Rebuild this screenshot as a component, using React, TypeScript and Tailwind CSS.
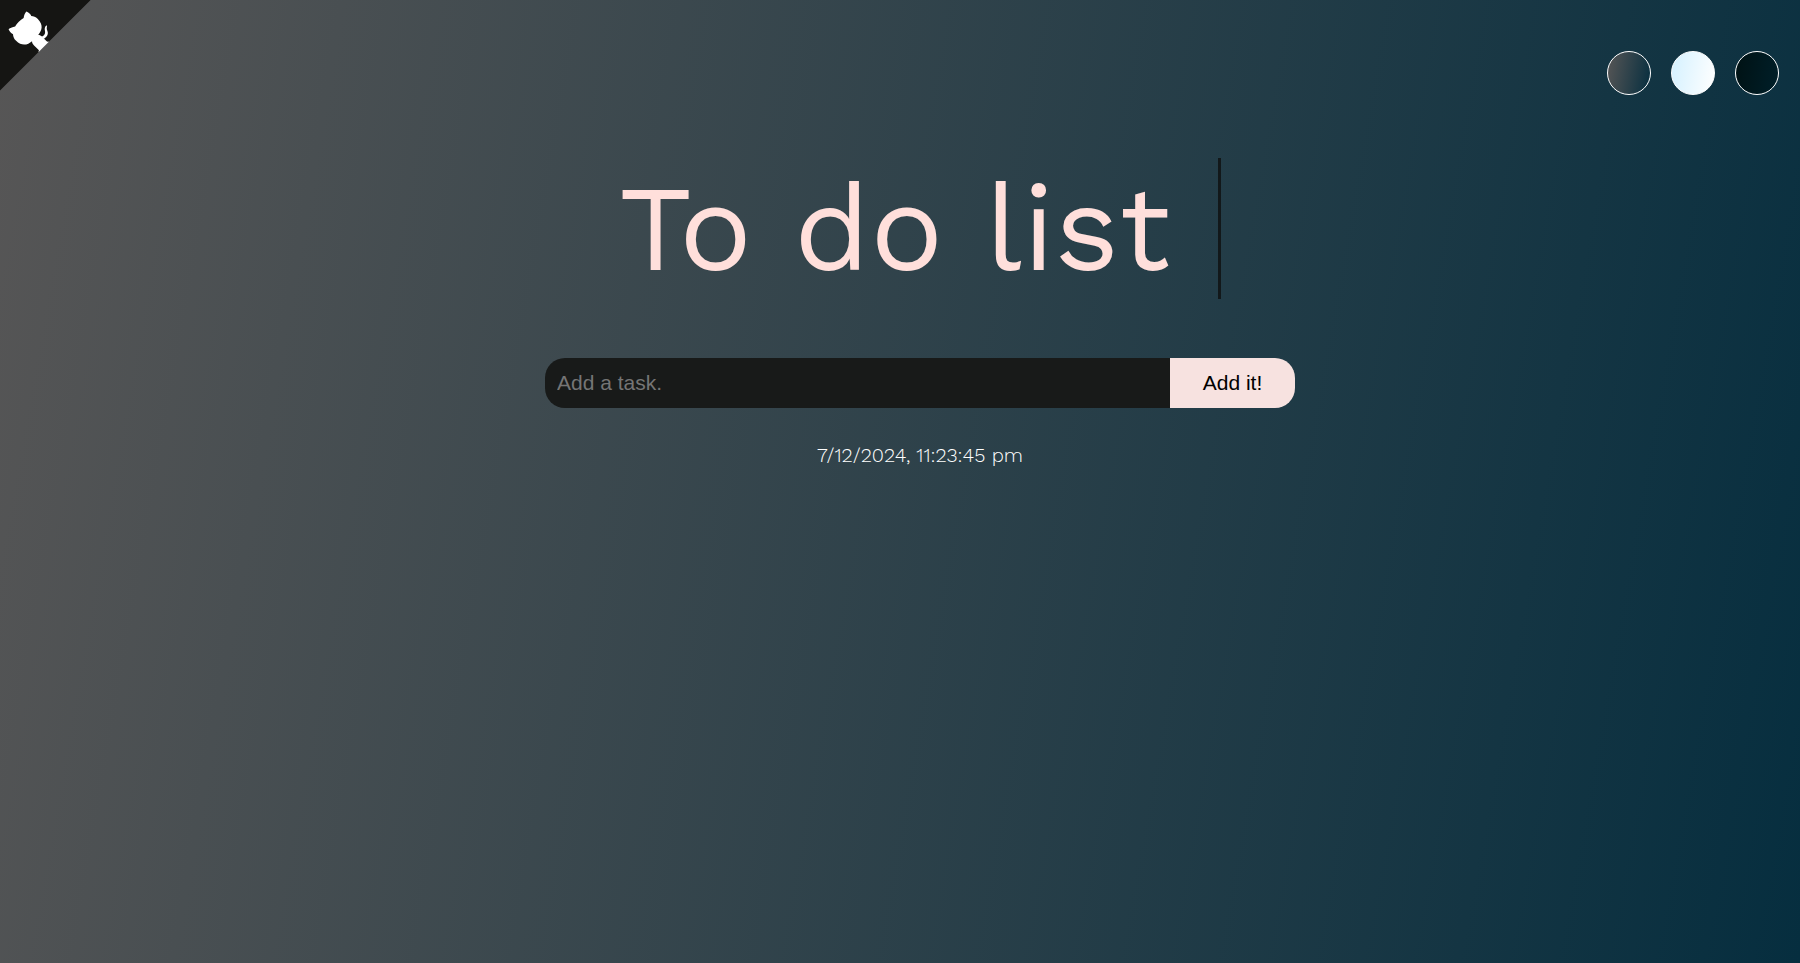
import { useState } from "react";
import type { FormEvent } from "react";

const themes = [
  { name: "Standard theme", fill: "bg-[linear-gradient(100deg,#575656,#062e3f)]" },
  { name: "Light theme", fill: "bg-[linear-gradient(100deg,#d4f1ff,#ffffff)]" },
  { name: "Darker theme", fill: "bg-[linear-gradient(100deg,#001214,#001f29)]" },
];

function GithubCorner() {
  return (
    <a href="#source" aria-label="View source on GitHub" className="absolute left-0 top-0">
      <svg width="91" height="91" viewBox="12 11 228 228" aria-hidden="true">
        <g transform="translate(250 0) scale(-1 1)">
          <path fill="#151513" d="M0,0 L115,115 L130,115 L142,142 L250,250 L250,0 Z" />
          <path
            fill="#fff"
            d="M128.3,109.0 C113.8,99.7 119.0,89.6 119.0,89.6 C122.0,82.7 120.5,78.6 120.5,78.6 C119.2,72.0 123.4,76.3 123.4,76.3 C127.3,80.9 125.5,87.3 125.5,87.3 C122.9,97.6 130.6,101.9 134.4,103.2"
          />
          <path
            fill="#fff"
            d="M115.0,115.0 C114.9,115.1 118.7,116.5 119.8,115.4 L133.7,101.6 C136.9,99.2 139.9,98.4 142.2,98.6 C133.8,88.0 127.5,74.4 143.8,58.0 C148.5,53.4 154.0,51.2 159.7,51.0 C160.3,49.4 163.2,43.6 171.4,40.1 C171.4,40.1 176.1,42.5 178.8,56.2 C183.1,58.6 187.2,61.8 190.9,65.4 C194.5,69.0 197.7,73.2 200.1,77.6 C213.8,80.2 216.3,84.9 216.3,84.9 C212.7,93.1 206.9,96.0 205.4,96.6 C205.1,102.4 203.0,107.8 198.3,112.5 C181.9,128.9 168.3,122.5 157.7,114.1 C157.9,116.9 156.7,120.9 152.7,124.9 L141.0,136.5 C139.8,137.7 141.6,141.9 141.8,141.8 Z"
          />
        </g>
      </svg>
    </a>
  );
}

export default function App() {
  const [task, setTask] = useState("");
  const [tasks, setTasks] = useState<string[]>([]);

  function addTask(event: FormEvent) {
    event.preventDefault();
    if (!task.trim()) return;
    setTasks([...tasks, task.trim()]);
    setTask("");
  }

  return (
    <div className="relative min-h-screen bg-[linear-gradient(100deg,#575656,#062e3f)] font-['Work_Sans','Inter',sans-serif] text-white">
      <GithubCorner />
      <header className="flex justify-end gap-5 pr-[21px] pt-[51px]">
        {themes.map((theme) => (
          <button
            key={theme.name}
            type="button"
            aria-label={theme.name}
            className={`size-11 cursor-pointer rounded-full border border-white ${theme.fill}`}
          />
        ))}
      </header>
      <main className="flex flex-col items-center pl-10 pt-[63px]">
        <h1 className="border-r-3 border-[#12181a] pr-12 text-[122px] leading-[141px] text-[#ffdfdb]">
          To do list
        </h1>
        <form onSubmit={addTask} className="mt-[59px] flex w-full max-w-[750px] font-['Liberation_Sans',Arial,sans-serif] text-[21px]">
          <input
            type="text"
            aria-label="New task"
            placeholder="Add a task."
            value={task}
            onChange={(event) => setTask(event.target.value)}
            className="h-[50px] min-w-0 flex-1 rounded-l-[20px] bg-[#181a19] px-3 text-white outline-none placeholder:text-[#757575]"
          />
          <button type="submit" className="h-[50px] w-[125px] cursor-pointer rounded-r-[20px] bg-[#f7e2e0] text-black">
            Add it!
          </button>
        </form>
        <p className="mt-[33px] text-xl leading-7 font-light">7/12/2024, 11:23:45 pm</p>
        <ul className="mt-6 w-full max-w-[750px] text-xl">
          {tasks.map((item, index) => (
            <li key={index} className="mb-2 rounded-[20px] bg-[#181a19] px-5 py-3">
              {item}
            </li>
          ))}
        </ul>
      </main>
    </div>
  );
}
